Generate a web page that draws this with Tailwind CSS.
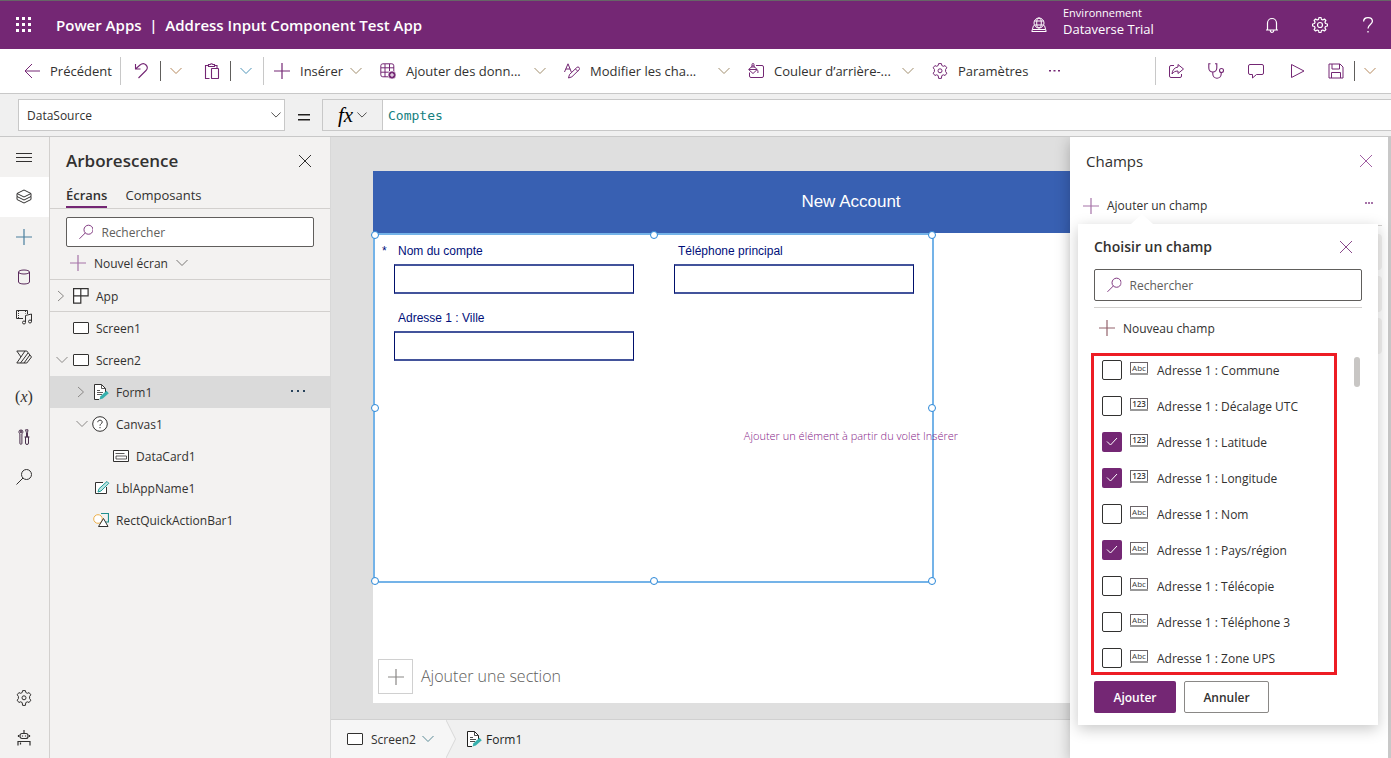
<!DOCTYPE html>
<html lang="fr">
<head>
<meta charset="utf-8">
<title>Power Apps | Address Input Component Test App</title>
<script src="https://cdn.jsdelivr.net/npm/@tailwindcss/browser@4"></script>
</head>
<body class="flex h-screen flex-col overflow-hidden bg-white font-['Open_Sans','Noto_Sans',sans-serif] text-[12px] text-[#323130]">

<svg class="hidden" aria-hidden="true">
  <symbol id="down" viewBox="0 0 12 8"><path d="M.5 1l5.500 5.500L11.500 1" fill="none" stroke="currentColor"/></symbol>
  <symbol id="right" viewBox="0 0 8 12"><path d="M1 1l5.500 5L1 11" fill="none" stroke="currentColor"/></symbol>
  <symbol id="plus" viewBox="0 0 16 16"><path d="M8 0v16M0 8h16" fill="none" stroke="currentColor" stroke-width="1.200"/></symbol>
  <symbol id="close" viewBox="0 0 14 14"><path d="M1 1l12 12M13 1L1 13" fill="none" stroke="currentColor"/></symbol>
  <symbol id="search" viewBox="0 0 16 16"><circle cx="10.500" cy="5.500" r="5" fill="none" stroke="currentColor"/><path d="M7 9L.5 15.500" stroke="currentColor"/></symbol>
  <symbol id="gear" viewBox="0 0 16 16"><path d="M6.600.6h2.800l.4 1.900 1.500.8 1.800-.7 1.700 2.200-1.200 1.600v2.200l1.200 1.600-1.700 2.300-1.800-.7-1.500.8-.4 2.800H6.600l-.4-2.800-1.500-.8-1.800.7-1.700-2.300 1.200-1.600V6.400L1.200 4.800l1.700-2.200 1.800.7 1.500-.8z" fill="none" stroke="currentColor" stroke-linejoin="round"/><circle cx="8" cy="7.800" r="2" fill="none" stroke="currentColor"/></symbol>
  <symbol id="cog" viewBox="0 0 16 16"><path d="M7 .5h2l.4 1.900 1.400.6 1.600-1 1.500 1.500-1 1.600.6 1.400 1.900.5v2l-1.900.5-.6 1.400 1 1.600-1.500 1.500-1.600-1-1.400.6L9 15.500H7l-.4-1.900-1.400-.6-1.600 1-1.500-1.500 1-1.600-.6-1.400L.6 9V7l1.900-.5.6-1.400-1-1.600L3.600 2l1.600 1 1.400-.6z" fill="none" stroke="currentColor" stroke-width="1.200" stroke-linejoin="round"/><circle cx="8" cy="8" r="2.500" fill="none" stroke="currentColor" stroke-width="1.200"/></symbol>
  <symbol id="screen" viewBox="0 0 16 12"><rect x=".5" y=".5" width="15" height="11" rx=".5" fill="#fff" stroke="currentColor"/></symbol>
  <symbol id="form" viewBox="0 0 16 16"><path d="M6 15.500H1.500V.5h7l4 4V8" fill="#fff" stroke="currentColor"/><path d="M8.500.5v4h4M4 6.500h3M4 8.500h6M4 10.500h5" fill="none" stroke="currentColor" stroke-width=".8"/><path d="M6.500 15.500l1-3.200 6-5.500 2.300 2.400-6 5.300z" fill="#36b0ad"/></symbol>
  <symbol id="abc" viewBox="0 0 18 13"><rect x=".5" y=".5" width="17" height="12" fill="#fff" stroke="#6b6468"/><path d="M0 12h18" stroke="#999" stroke-width="2"/><text x="9" y="9" text-anchor="middle" font-size="8" fill="#3b3a39">Abc</text></symbol>
  <symbol id="num" viewBox="0 0 18 13"><rect x=".5" y=".5" width="17" height="12" fill="#fff" stroke="#6b6468"/><path d="M0 12h18" stroke="#999" stroke-width="2"/><text x="9" y="9" text-anchor="middle" font-size="8" fill="#3b3a39" font-weight="600">123</text></symbol>
</svg>

<header class="flex h-[49px] shrink-0 items-center border-t border-[#666] bg-[#742774] pl-4 pr-[15px] text-white">
  <button aria-label="Lanceur d’applications" class="flex w-4 justify-center"><svg class="size-4" viewBox="0 0 16 16" fill="#fff"><path d="M0 0h3v3H0zM6 0h3v3H6zM12 0h3v3h-3zM0 6h3v3H0zM6 6h3v3H6zM12 6h3v3h-3zM0 12h3v3H0zM6 12h3v3H6zM12 12h3v3h-3z"/></svg></button>
  <h1 class="ml-6 flex-1 whitespace-pre text-[15px] font-semibold">Power Apps  |  Address Input Component Test App</h1>
  <svg class="mr-4 size-4" viewBox="0 0 16 16" fill="none" stroke="#fff"><circle cx="8" cy="6" r="5"/><ellipse cx="8" cy="6" rx="2.300" ry="5"/><path d="M3.500 4h9M3.500 8h9M2.500 8.500L.8 14.500h14.400l-1.700-6M2 12.500h12"/></svg>
  <div class="w-[201px] pb-2">
    <div class="text-[11px] leading-4">Environnement</div>
    <div class="text-[13px] leading-4">Dataverse Trial</div>
  </div>
  <div class="flex gap-8">
    <button aria-label="Notifications"><svg class="size-4" viewBox="0 0 16 16" fill="none" stroke="#fff" stroke-width="1.200"><path d="M2 13h12M3.500 13V6a4.500 4.500 0 0 1 9 0v7M6.200 13.500a1.800 1.800 0 0 0 3.600 0"/></svg></button>
    <button aria-label="Paramètres" class="w-4"><svg class="size-4"><use href="#cog"/></svg></button>
    <button aria-label="Aide" class="w-4"><svg class="size-4" viewBox="0 0 16 16" fill="none" stroke="#fff" stroke-width="1.300"><path d="M3.600 4.500C3.600 2 5.500.7 8 .7s4.400 1.400 4.400 3.600C12.400 7.500 8 7.500 8 11.500M8 14v1.500"/></svg></button>
  </div>
</header>

<div class="flex h-[45px] shrink-0 items-center border-b border-[#c8c8c8] text-[13px] text-[#742774] [&_button>span]:pt-0.5">
  <button class="flex items-center pl-6"><svg class="size-4" viewBox="0 0 16 16" fill="none" stroke="currentColor"><path d="M16 8H1M8 1L1 8l7 7"/></svg><span class="ml-2.5 w-[70px] text-left text-[#323130]">Précédent</span></button>
  <span class="h-7 w-px bg-[#c8c8c8]"></span>
  <button aria-label="Annuler l’action" class="ml-[13px] w-[26px]"><svg class="size-4" viewBox="0 0 16 16" fill="none" stroke="currentColor" stroke-width="1.100"><path d="M1.500 1v5H6.500M1.500 6L6 2c2-1.600 4.500-1.600 6 0s1.500 4 0 5.500L4.500 15"/></svg></button>
  <span class="h-5 w-px bg-[#605e5c]"></span>
  <button aria-label="Plus d’annulations" class="ml-[9px] w-6 text-[#b5885c]"><svg class="h-2 w-3"><use href="#down"/></svg></button>
  <button aria-label="Coller" class="ml-[10px] w-[26px]"><svg class="size-4" viewBox="0 0 16 16" fill="none" stroke="currentColor" stroke-width="1.100"><path d="M5.500 15.500h-4v-13h3M10 2.500h3V5M4.500 1.500h1.700a1.500 1.500 0 0 1 2.600 0h1.700v2h-6z"/><rect x="7.500" y="5.500" width="7" height="10" rx=".5"/></svg></button>
  <span class="h-5 w-px bg-[#605e5c]"></span>
  <button aria-label="Options de collage" class="ml-[9px] w-[23px] text-[#4f94b8]"><svg class="h-2 w-3"><use href="#down"/></svg></button>
  <span class="h-7 w-px bg-[#c8c8c8]"></span>
  <button class="ml-2.5 flex items-center"><svg class="size-4"><use href="#plus"/></svg><span class="ml-2.5 w-[50px] text-left text-[#323130]">Insérer</span><svg class="h-2 w-3 text-[#a08d6c]"><use href="#down"/></svg></button>
  <button class="ml-[18px] flex items-center"><svg class="size-4" viewBox="0 0 16 16" fill="none" stroke="currentColor"><rect x=".8" y=".8" width="13" height="13" rx="2"/><path d="M1 4.800h13M1 9.200h8M5 1v13M9.500 1v7"/><circle cx="12" cy="12" r="4" fill="currentColor" stroke="#fff" stroke-width=".6"/><path d="M12 10v4M10 12h4" stroke="#fff"/></svg><span class="ml-2.5 w-[128px] text-left text-[#323130]">Ajouter des donn...</span><svg class="h-2 w-3 text-[#a08d6c]"><use href="#down"/></svg></button>
  <button class="ml-[18px] flex items-center"><svg class="size-4" viewBox="0 0 16 16" fill="none" stroke="currentColor"><path d="M.5 9L4 .8 7.300 9M1.800 6h4.400M4.500 15l1-3.500 7.300-7a1.600 1.600 0 0 1 2.300 2.300l-7.200 7zM11.500 6l2.200 2.200"/></svg><span class="ml-2.5 w-[128px] text-left text-[#323130]">Modifier les cha...</span><svg class="h-2 w-3 text-[#a08d6c]"><use href="#down"/></svg></button>
  <button class="ml-[18px] flex items-center"><svg class="size-4" viewBox="0 0 16 16" fill="none" stroke="currentColor"><path d="M8 2.500h6a1.500 1.500 0 0 1 1.500 1.500v9a1.500 1.500 0 0 1-1.500 1.500H3A1.500 1.500 0 0 1 1.500 13V9.500"/><path d="M.6 6.500L5 2.500l4.200 4L5 10.500zM1 6.500h8M4 5V1.500a1 1 0 0 1 2 0V5M9 6.500c1 1 1.200 2 .8 3.500"/></svg><span class="ml-2.5 w-[128px] text-left text-[#323130]">Couleur d’arrière-...</span><svg class="h-2 w-3 text-[#a08d6c]"><use href="#down"/></svg></button>
  <button class="ml-[18px] flex items-center"><svg class="size-4"><use href="#gear"/></svg><span class="ml-2.5 w-[91px] text-left text-[#323130]">Paramètres</span></button>
  <button aria-label="Autres commandes"><svg class="h-1 w-3" viewBox="0 0 12 4" fill="currentColor"><path d="M0 1h2v1.500H0zM4.500 1h2v1.500h-2zM9 1h2v1.500H9z"/></svg></button>
  <div class="ml-auto flex items-center">
    <span class="mr-3 h-7 w-px bg-[#c8c8c8]"></span>
    <button aria-label="Partager" class="w-10"><svg class="size-4" viewBox="0 0 16 16" fill="none" stroke="currentColor"><path d="M6 2.500H3A1.500 1.500 0 0 0 1.500 4v9A1.500 1.500 0 0 0 3 14.500h9a1.500 1.500 0 0 0 1.500-1.500v-2M10 4V1.500L15.500 6 10 10.500V8C7 8 5.500 9 4 11c.3-4 2.500-6.500 6-7z" stroke-linejoin="round"/></svg></button>
    <button aria-label="Vérificateur" class="w-10"><svg class="size-4" viewBox="0 0 16 16" fill="none" stroke="currentColor" stroke-width="1.100"><path d="M2.500.8H.8V5a4 4 0 0 0 8 0V.8H7M4.800 9v2a4.200 4.200 0 0 0 8.400 0V9.500"/><circle cx="13.500" cy="7.500" r="2"/></svg></button>
    <button aria-label="Commentaires" class="w-10"><svg class="size-4" viewBox="0 0 16 16" fill="none" stroke="currentColor"><path d="M2 1.500h12A1.500 1.500 0 0 1 15.500 3v7a1.500 1.500 0 0 1-1.500 1.500H8.500l-4 3.500v-3.500H2A1.500 1.500 0 0 1 .5 10V3A1.500 1.500 0 0 1 2 1.500z"/></svg></button>
    <button aria-label="Aperçu" class="w-10"><svg class="ml-0.5 size-4" viewBox="0 0 16 16" fill="none" stroke="currentColor"><path d="M1.500 1.500v13L14 8z" stroke-linejoin="round"/></svg></button>
    <button aria-label="Enregistrer" class="w-[26px]"><svg class="size-4" viewBox="0 0 16 16" fill="none" stroke="currentColor"><path d="M1 1h11l3 3v11H1zM4 1v5h7.500V1M3.500 15V9.500h9V15"/></svg></button>
    <span class="h-5 w-px bg-[#605e5c]"></span>
    <button aria-label="Options d’enregistrement" class="ml-[9px] mr-[15px] text-[#b5885c]"><svg class="h-2 w-3"><use href="#down"/></svg></button>
  </div>
</div>

<div class="flex h-[43px] shrink-0 items-center border-b border-[#c8c8c8] bg-[#f0f0f0] pl-[18px]">
  <div class="relative w-[267px]">
    <select aria-label="Propriété" class="h-8 w-full appearance-none border border-[#c8c8c8] bg-white px-2 pt-0.5 text-[12px]"><option>DataSource</option></select>
    <svg class="pointer-events-none absolute right-1 top-3 h-2 w-2.5"><use href="#down"/></svg>
  </div>
  <svg class="ml-[13px] mt-1 h-2.5 w-3" viewBox="0 0 12 10" fill="#201f1e" aria-label="égal"><path d="M0 2h12v1.500H0zM0 7h12v1.500H0z"/></svg>
  <button aria-label="Fonctions" class="ml-3 flex h-8 w-[60px] items-center justify-center gap-1 border border-r-0 border-[#c8c8c8]"><span class="font-['Liberation_Serif',serif] text-[21px] italic leading-none text-black">fx</span><svg class="h-2 w-2.5"><use href="#down"/></svg></button>
  <input aria-label="Formule" value="Comptes" class="h-8 min-w-0 flex-1 border border-r-0 border-[#c8c8c8] bg-white px-[5px] font-['DejaVu_Sans_Mono',monospace] text-[13px] text-[#148080] outline-none">
</div>

<div class="flex min-h-0 flex-1 overflow-hidden">
  <nav class="flex w-[50px] shrink-0 flex-col border-r border-[#d2d0ce] bg-[#f3f2f1] [&_button]:pr-px" aria-label="Barre latérale">
    <button aria-label="Menu" class="flex h-10 items-center justify-center"><svg class="size-4" viewBox="0 0 16 16" stroke="currentColor"><path d="M0 4.500h16M0 8.500h16M0 12.500h16"/></svg></button>
    <button aria-label="Arborescence" class="flex h-10 items-center justify-center bg-white"><svg class="size-4" viewBox="0 0 16 16" fill="none" stroke="currentColor"><path d="M8 1l7 3.500L8 8 1 4.500zM1 4.500v3L8 11l7-3.500v-3M1 7.500v3L8 14l7-3.500v-3"/></svg></button>
    <button aria-label="Insérer" class="flex h-10 items-center justify-center text-[#4a7f9e]"><svg class="size-4"><use href="#plus"/></svg></button>
    <button aria-label="Données" class="flex h-10 items-center justify-center text-[#5a2a5c]"><svg class="size-4" viewBox="0 0 16 16" fill="none" stroke="currentColor"><ellipse cx="8" cy="3" rx="5.500" ry="2"/><path d="M2.500 3v10c0 1.100 2.400 2 5.500 2s5.500-.9 5.500-2V3"/></svg></button>
    <button aria-label="Média" class="flex h-10 items-center justify-center"><svg class="size-4" viewBox="0 0 16 16" fill="none" stroke="currentColor"><path d="M7 9.500H.5v-8h11V5"/><path d="M2.500 2v7M9.500 2v2.500" stroke-dasharray="1 1"/><path d="M9.500 13V6.500l6-1.500v7.500"/><circle cx="8" cy="13.500" r="1.500"/><circle cx="14" cy="12.500" r="1.500"/></svg></button>
    <button aria-label="Power Automate" class="flex h-10 items-center justify-center"><svg class="size-4" viewBox="0 0 16 16" fill="none" stroke="currentColor" stroke-linejoin="round"><path d="M.8 2h10l4.700 6-4.700 6H.8L9 2M.8 2L5 8M12 4L4.500 14M13.800 6L8 14"/></svg></button>
    <button aria-label="Variables" class="flex h-10 items-center justify-center font-['Liberation_Serif',serif] text-[16px]">(<i>x</i>)</button>
    <button aria-label="Outils avancés" class="flex h-10 items-center justify-center text-[#4a304c]"><svg class="size-4" viewBox="0 0 16 16" fill="none" stroke="currentColor"><path d="M4.300.8v2.700h1.400V.8c1.400.7 1.700 3 .2 4v9.500a1 1 0 0 1-2 0V4.800c-1.500-1-1.200-3.300.4-4zM9.500.8h2.500l-.5 3V8h1v6a1.300 1.300 0 0 1-3 0V8h1V3.800zM8.500 8h5"/></svg></button>
    <button aria-label="Rechercher" class="flex h-10 items-center justify-center"><svg class="size-4"><use href="#search"/></svg></button>
    <button aria-label="Paramètres de l’application" class="mt-auto flex h-10 items-center justify-center"><svg class="size-4"><use href="#gear"/></svg></button>
    <button aria-label="Agents virtuels" class="flex h-10 items-center justify-center"><svg class="size-4" viewBox="0 0 16 16" fill="none" stroke="currentColor" stroke-width="1.200"><path d="M8 0v3.500M2 15.500v-4h12v4M4.500 12.500v2"/><rect x="4" y="3.500" width="8" height="5" rx="2"/><path d="M2.500 5v2M13.500 5v2M6.500 5.500v1M9.500 5.500v1"/></svg></button>
  </nav>

  <aside class="w-[281px] shrink-0 border-r border-[#d8d8d8] bg-[#f3f2f1]">
    <div class="flex h-12 items-center justify-between px-4">
      <h2 class="text-[17px] font-semibold">Arborescence</h2>
      <button aria-label="Fermer" class="mr-0.5"><svg class="size-3.5"><use href="#close"/></svg></button>
    </div>
    <div class="flex h-6 gap-[18px] border-b border-[#d2d0ce] px-4 text-[13px]">
      <button class="border-b-2 border-[#742774] pb-0.5 font-semibold leading-5">Écrans</button>
      <button class="pb-1 leading-5">Composants</button>
    </div>
    <label class="mx-4 mt-2 flex h-[30px] items-center rounded-xs border border-[#605e5c] bg-white pl-3">
      <svg class="size-4 text-[#742774]"><use href="#search"/></svg>
      <input type="search" aria-label="Rechercher dans l’arborescence" placeholder="Rechercher" class="ml-2 w-full pt-0.5 outline-none placeholder:text-[#605e5c]">
    </label>
    <button class="flex h-[32px] w-full items-center pl-5"><svg class="size-4 text-[#a673a8]"><use href="#plus"/></svg><span class="ml-2 pt-0.5">Nouvel écran</span><svg class="ml-2 h-2 w-3 text-[#797775]"><use href="#down"/></svg></button>
    <ul class="[&_span]:pt-0.5">
      <li class="flex h-[33px] items-center border-y border-[#d2d0ce] pl-[7px]"><svg class="mr-2 h-3 w-2 text-[#8a8886]"><use href="#right"/></svg><svg class="mr-[7px] size-4" viewBox="0 0 16 16" fill="#fff" stroke="currentColor" stroke-width="1.200"><path d="M.6.600h14.500v7.300H7.800v7.300H.6zM7.800.6v7.300H.6"/></svg><span>App</span></li>
      <li class="flex h-8 items-center pl-[23px]"><svg class="mr-[7px] h-3 w-4"><use href="#screen"/></svg><span>Screen1</span></li>
      <li class="flex h-8 items-center pl-1.5"><svg class="mr-[5px] h-2 w-3 text-[#8a8886]"><use href="#down"/></svg><svg class="mr-[7px] h-3 w-4"><use href="#screen"/></svg><span>Screen2</span></li>
      <li class="flex h-8 items-center bg-[#dadada] pl-[27px]"><svg class="mr-2 h-3 w-2 text-[#8a8886]"><use href="#right"/></svg><svg class="mr-[7px] size-4"><use href="#form"/></svg><span>Form1</span><button aria-label="Actions de Form1" class="ml-auto mr-6"><svg class="h-1 w-4" viewBox="0 0 16 4" fill="#29435c"><path d="M1 0h2v2H1zM7 0h2v2H7zM13 0h2v2h-2z"/></svg></button></li>
      <li class="flex h-8 items-center pl-[26px]"><svg class="mr-1 h-2 w-3 text-[#8a8886]"><use href="#down"/></svg><svg class="mr-2 size-4" viewBox="0 0 16 16" fill="none" stroke="currentColor"><circle cx="8" cy="8" r="7.300" fill="#fff"/><path d="M5.800 6.200C5.800 5 6.700 4.200 8 4.200s2.200.7 2.200 1.900C10.200 7.700 8 7.700 8 9.700M8 11v1.200"/></svg><span>Canvas1</span></li>
      <li class="flex h-8 items-center pl-[63px]"><svg class="mr-[7px] h-3 w-4" viewBox="0 0 16 12" fill="#fff" stroke="currentColor"><path d="M.5.500h15v11H.5z"/><path d="M2.500 3.500h9M3 6h10.500v3H3z" stroke-width=".8"/></svg><span>DataCard1</span></li>
      <li class="flex h-8 items-center pl-11"><svg class="mr-1.5 size-4" viewBox="0 0 16 16" fill="none" stroke="currentColor"><path d="M12.500 7v6.500h-11v-11H9" fill="#fff"/><path d="M4 12l1-3.300 8-7.200 1.800 1.800L7 11z" fill="#bfe6e4" stroke="#1f9b98"/></svg><span>LblAppName1</span></li>
      <li class="flex h-8 items-center pl-[43px]"><svg class="mr-[7px] size-4" viewBox="0 0 16 16" fill="#fff"><circle cx="5" cy="7" r="4.300" stroke="#edb04a"/><path d="M8 1.500h7.500v8.500H12" fill="none" stroke="#1f8f8c" stroke-width="1.200"/><path d="M5.500 14.500l5-8 4.500 8z" stroke="currentColor"/></svg><span>RectQuickActionBar1</span></li>
    </ul>
  </aside>

  <main class="flex min-w-0 flex-1 flex-col overflow-hidden bg-[#dfdfdf]">
    <div class="flex min-h-0 flex-1 overflow-hidden pl-[42px] pt-[34px]">
      <section class="relative h-[532px] w-[956px] shrink-0 bg-white font-['Liberation_Sans',Arial,sans-serif] text-[#000f7a]">
        <h2 class="flex h-[62px] items-center justify-center bg-[#3860b2] text-[17px] text-white">New Account</h2>
        <form class="relative grid h-[350px] w-[561px] auto-rows-[67px] grid-cols-2 border-2 border-[#74b3e8] pl-[19px] pt-[7px]">
          <div class="relative"><span class="absolute -left-3">*</span><label for="nom" class="block pl-1 leading-[18px]">Nom du compte</label><input id="nom" class="mt-1 h-[30px] w-[240px] border-x border-y-2 border-x-[#000f6b] border-y-[#43539b] bg-white outline-none"></div>
          <div><label for="tel" class="block pl-[15px] leading-[18px]">Téléphone principal</label><input id="tel" class="ml-[11px] mt-1 h-[30px] w-[240px] border-x border-y-2 border-x-[#000f6b] border-y-[#43539b] bg-white outline-none"></div>
          <div><label for="ville" class="block pl-1 leading-[18px]">Adresse 1 : Ville</label><input id="ville" class="mt-1 h-[30px] w-[240px] border-x border-y-2 border-x-[#000f6b] border-y-[#43539b] bg-white outline-none"></div>
          <i class="absolute -left-1 -top-1 size-2 rounded-full border border-[#2b88d8] bg-white"></i>
          <i class="absolute -top-1 left-1/2 size-2 -translate-x-1/2 rounded-full border border-[#2b88d8] bg-white"></i>
          <i class="absolute -right-1 -top-1 size-2 rounded-full border border-[#2b88d8] bg-white"></i>
          <i class="absolute -left-1 top-1/2 size-2 -translate-y-1/2 rounded-full border border-[#2b88d8] bg-white"></i>
          <i class="absolute -right-1 top-1/2 size-2 -translate-y-1/2 rounded-full border border-[#2b88d8] bg-white"></i>
          <i class="absolute -bottom-1 -left-1 size-2 rounded-full border border-[#2b88d8] bg-white"></i>
          <i class="absolute -bottom-1 left-1/2 size-2 -translate-x-1/2 rounded-full border border-[#2b88d8] bg-white"></i>
          <i class="absolute -bottom-1 -right-1 size-2 rounded-full border border-[#2b88d8] bg-white"></i>
        </form>
        <p class="absolute inset-x-0 top-[257px] text-center font-['Open_Sans',sans-serif] text-[11px] font-light leading-4 text-[#852087]">Ajouter un élément à partir du volet Insérer</p>
        <button class="ml-[5px] mt-[76px] flex items-center gap-2 font-['Open_Sans',sans-serif] text-[16px] font-light text-[#605e5c]"><span class="flex size-[35px] items-center justify-center border border-[#d0d0d0]"><svg class="size-4 text-[#8a8886]"><use href="#plus"/></svg></span><span class="pb-0.5">Ajouter une section</span></button>
      </section>
    </div>
    <nav class="flex h-[39px] shrink-0 items-stretch border-t border-[#d0d0d0] bg-[#f0f0f0] [&_span]:pt-0.5" aria-label="Fil d’Ariane">
      <button class="flex w-[115px] items-center bg-[#f6f6f6] pl-4"><svg class="mr-2 h-3 w-4"><use href="#screen"/></svg><span>Screen2</span><svg class="ml-1.5 h-2 w-3 text-[#5a8a96]"><use href="#down"/></svg></button>
      <svg class="h-full w-2.5" viewBox="0 0 10 38" preserveAspectRatio="none"><path d="M0 0l9.500 19L0 38" fill="#f6f6f6" stroke="#d8d8d8"/></svg>
      <button class="flex items-center pl-2.5 text-[#201f1e]"><svg class="mr-1 size-4"><use href="#form"/></svg><span>Form1</span></button>
    </nav>
  </main>

  <aside class="relative w-[321px] shrink-0 border-r-3 border-[#c8c8c8] bg-white shadow-[0_4px_14px_rgba(0,0,0,0.25)]">
    <div class="flex h-12 items-center justify-between pl-4 pr-[15px]">
      <h2 class="text-[15px]">Champs</h2>
      <button aria-label="Fermer le volet Champs" class="text-[#a05fa2]"><svg class="size-3.5"><use href="#close"/></svg></button>
    </div>
    <div class="mt-0.5 flex h-[38px] items-center justify-between pl-[13px] pr-[15px] text-[#a673a8]">
      <button class="flex items-center"><svg class="size-4"><use href="#plus"/></svg><span class="ml-2 text-[#323130]">Ajouter un champ</span></button>
      <button aria-label="Autres options" class="mb-1.5"><svg class="h-1 w-2" viewBox="0 0 8 4" fill="currentColor"><path d="M0 1h2v2H0zM3 1h2v2H3zM6 1h2v2H6z"/></svg></button>
    </div>
    <ul class="ml-4 mr-[6px] flex flex-col gap-1.5 border-t border-[#d2d0ce] pt-2">
      <li class="h-9 rounded-sm bg-[#f3f2f1]"></li><li class="h-9 rounded-sm bg-[#f3f2f1]"></li><li class="h-9 rounded-sm bg-[#f3f2f1]"></li>
    </ul>

    <div role="dialog" aria-label="Choisir un champ" class="absolute left-2 right-2.5 top-[87px] h-[501px] bg-white px-4 shadow-[0_4px_14px_rgba(0,0,0,0.22)]">
      <svg class="absolute -top-2.5 left-[53px] h-2.5 w-[22px]" viewBox="0 0 22 10"><path d="M0 10L11 0l11 10z" fill="#fff"/></svg>
      <div class="flex h-[45px] items-center justify-between">
        <h3 class="text-[14px] font-semibold">Choisir un champ</h3>
        <button aria-label="Fermer" class="mr-[9px] text-[#8a4a8c]"><svg class="size-3.5"><use href="#close"/></svg></button>
      </div>
      <label class="flex h-8 items-center rounded-xs border border-[#605e5c] pl-3">
        <svg class="size-4 text-[#742774]"><use href="#search"/></svg>
        <input type="search" aria-label="Rechercher un champ" placeholder="Rechercher" class="ml-2 w-full pt-0.5 outline-none placeholder:text-[#605e5c]">
      </label>
      <button class="mt-1.5 flex h-[45px] w-full items-center border-t border-[#d2d0ce] pb-1 pl-[5px]"><svg class="size-4 text-[#93636c]"><use href="#plus"/></svg><span class="ml-2 pt-0.5">Nouveau champ</span></button>
      <div class="relative">
        <ul class="pl-2 [&_label>span:last-child]:pt-0.5">
          <li><label class="flex h-9 items-center"><input type="checkbox" class="size-5 appearance-none rounded-xs border border-[#323130]"><svg class="mb-1 ml-2 mr-[9px] h-[13px] w-[18px]"><use href="#abc"/></svg><span>Adresse 1 : Commune</span></label></li>
          <li><label class="flex h-9 items-center"><input type="checkbox" class="size-5 appearance-none rounded-xs border border-[#323130]"><svg class="mb-1 ml-2 mr-[9px] h-[13px] w-[18px]"><use href="#num"/></svg><span>Adresse 1 : Décalage UTC</span></label></li>
          <li><label class="flex h-9 items-center"><span class="relative flex"><input type="checkbox" checked class="size-5 appearance-none rounded-xs bg-[#742774]"><svg class="pointer-events-none absolute left-1 top-1 size-3" viewBox="0 0 12 12" fill="none" stroke="#fff"><path d="M1 5.500L4.500 9 11 2"/></svg></span><svg class="mb-1 ml-2 mr-[9px] h-[13px] w-[18px]"><use href="#num"/></svg><span>Adresse 1 : Latitude</span></label></li>
          <li><label class="flex h-9 items-center"><span class="relative flex"><input type="checkbox" checked class="size-5 appearance-none rounded-xs bg-[#742774]"><svg class="pointer-events-none absolute left-1 top-1 size-3" viewBox="0 0 12 12" fill="none" stroke="#fff"><path d="M1 5.500L4.500 9 11 2"/></svg></span><svg class="mb-1 ml-2 mr-[9px] h-[13px] w-[18px]"><use href="#num"/></svg><span>Adresse 1 : Longitude</span></label></li>
          <li><label class="flex h-9 items-center"><input type="checkbox" class="size-5 appearance-none rounded-xs border border-[#323130]"><svg class="mb-1 ml-2 mr-[9px] h-[13px] w-[18px]"><use href="#abc"/></svg><span>Adresse 1 : Nom</span></label></li>
          <li><label class="flex h-9 items-center"><span class="relative flex"><input type="checkbox" checked class="size-5 appearance-none rounded-xs bg-[#742774]"><svg class="pointer-events-none absolute left-1 top-1 size-3" viewBox="0 0 12 12" fill="none" stroke="#fff"><path d="M1 5.500L4.500 9 11 2"/></svg></span><svg class="mb-1 ml-2 mr-[9px] h-[13px] w-[18px]"><use href="#abc"/></svg><span>Adresse 1 : Pays/région</span></label></li>
          <li><label class="flex h-9 items-center"><input type="checkbox" class="size-5 appearance-none rounded-xs border border-[#323130]"><svg class="mb-1 ml-2 mr-[9px] h-[13px] w-[18px]"><use href="#abc"/></svg><span>Adresse 1 : Télécopie</span></label></li>
          <li><label class="flex h-9 items-center"><input type="checkbox" class="size-5 appearance-none rounded-xs border border-[#323130]"><svg class="mb-1 ml-2 mr-[9px] h-[13px] w-[18px]"><use href="#abc"/></svg><span>Adresse 1 : Téléphone 3</span></label></li>
          <li><label class="flex h-9 items-center"><input type="checkbox" class="size-5 appearance-none rounded-xs border border-[#323130]"><svg class="mb-1 ml-2 mr-[9px] h-[13px] w-[18px]"><use href="#abc"/></svg><span>Adresse 1 : Zone UPS</span></label></li>
        </ul>
        <div class="pointer-events-none absolute -left-[3px] right-[25px] top-px h-[322px] border-3 border-[#ed1c24]"></div>
        <div class="absolute right-0.5 top-[5px] h-[30px] w-1.5 rounded-full bg-[#c8c6c4]"></div>
      </div>
      <div class="mt-[5px] flex gap-2">
        <button class="h-8 w-[82px] rounded-xs bg-[#742774] pt-0.5 font-semibold text-white">Ajouter</button>
        <button class="h-8 w-[85px] rounded-xs border border-[#8a8886] pt-0.5 font-semibold">Annuler</button>
      </div>
    </div>
  </aside>
</div>
</body>
</html>
